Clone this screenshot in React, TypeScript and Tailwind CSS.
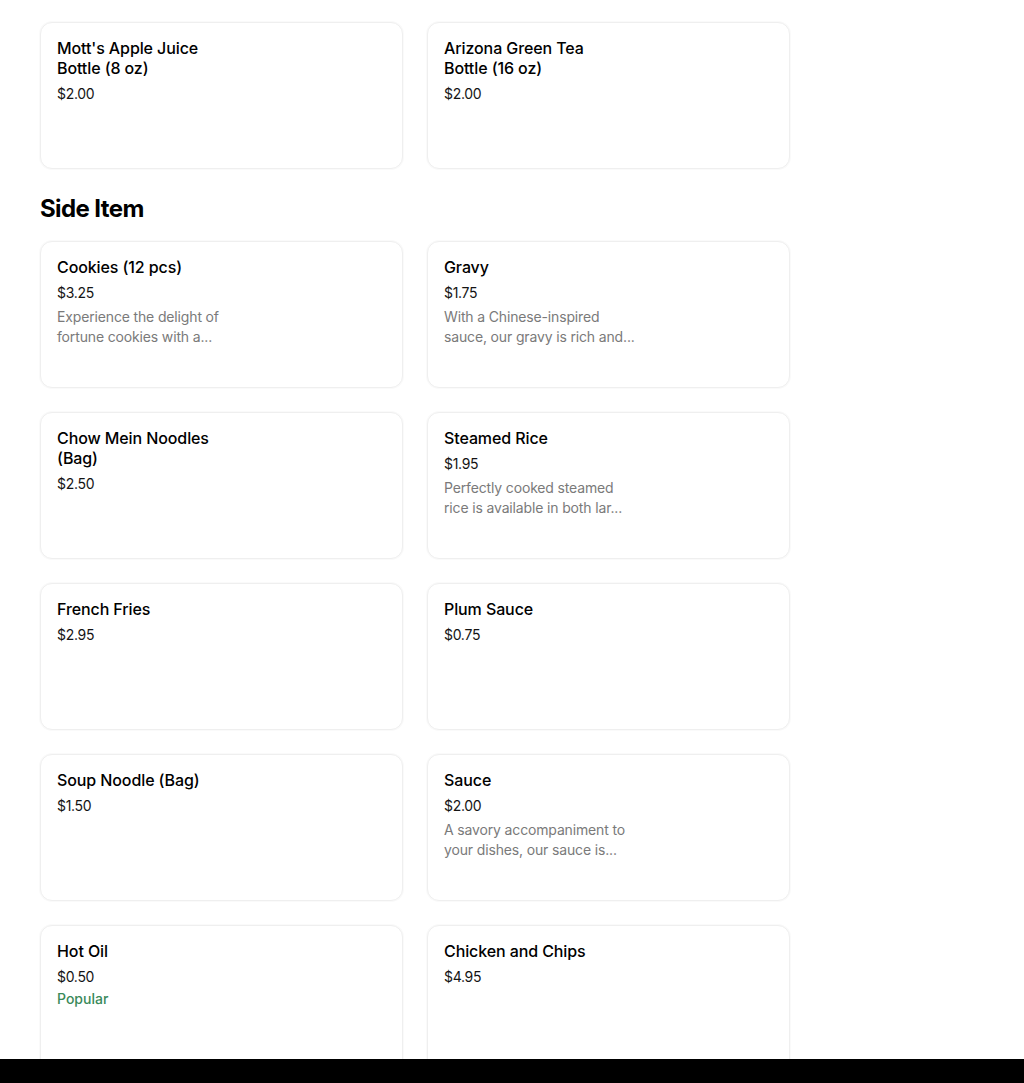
type Item = {
  name: string
  price: string
  description?: [string, string]
  popular?: boolean
}

const DRINKS: Item[] = [
  { name: "Mott's Apple Juice Bottle (8 oz)", price: '$2.00' },
  { name: 'Arizona Green Tea Bottle (16 oz)', price: '$2.00' },
]

// descriptions are shown the way the menu cuts them: two lines and an ellipsis
const SIDES: Item[] = [
  {
    name: 'Cookies (12 pcs)',
    price: '$3.25',
    description: ['Experience the delight of', 'fortune cookies with a...'],
  },
  {
    name: 'Gravy',
    price: '$1.75',
    description: ['With a Chinese-inspired', 'sauce, our gravy is rich and...'],
  },
  { name: 'Chow Mein Noodles (Bag)', price: '$2.50' },
  {
    name: 'Steamed Rice',
    price: '$1.95',
    description: ['Perfectly cooked steamed', 'rice is available in both lar...'],
  },
  { name: 'French Fries', price: '$2.95' },
  { name: 'Plum Sauce', price: '$0.75' },
  { name: 'Soup Noodle (Bag)', price: '$1.50' },
  {
    name: 'Sauce',
    price: '$2.00',
    description: ['A savory accompaniment to', 'your dishes, our sauce is...'],
  },
  { name: 'Hot Oil', price: '$0.50', popular: true },
  { name: 'Chicken and Chips', price: '$4.95' },
]

function ItemCard({ item }: { item: Item }) {
  return (
    <div className="h-[147px] rounded-xl border border-[#efefef] bg-white px-4 pt-[15px] shadow-[0_0_0_1px_#fafafa]">
      <div className="w-[184px]">
        <p className="text-[16px] leading-5 font-medium tracking-[-0.1px] text-black">
          {item.name}
        </p>
        <p className="mt-[6px] text-[14px] leading-5 tracking-[-0.3px] text-[#141414]">
          {item.price}
        </p>
        {item.description && (
          <div className="mt-1 text-[14px] leading-5 tracking-[-0.15px] text-[#7a7a7a]">
            {item.description.map((line) => (
              <p key={line} className="whitespace-nowrap">
                {line}
              </p>
            ))}
          </div>
        )}
        {item.popular && (
          <p className="mt-0.5 text-[14px] leading-5 font-medium text-[#3a8a5a]">
            Popular
          </p>
        )}
      </div>
    </div>
  )
}

export default function App() {
  return (
    <div
      className="min-h-[1083px] bg-white pl-10 pt-[22px] pb-12"
      style={{ fontFamily: 'Inter, "Noto Sans", sans-serif' }}
    >
      <div className="grid w-[750px] grid-cols-2 gap-6">
        {DRINKS.map((item) => (
          <ItemCard key={item.name} item={item} />
        ))}
      </div>

      <h2 className="mt-6 mb-4 text-[24px] leading-8 font-bold tracking-[-0.6px] text-black">
        Side Item
      </h2>

      <div className="grid w-[750px] grid-cols-2 gap-6">
        {SIDES.map((item) => (
          <ItemCard key={item.name} item={item} />
        ))}
      </div>

      <div className="fixed bottom-0 left-0 right-0 h-6 bg-black" />
    </div>
  )
}
